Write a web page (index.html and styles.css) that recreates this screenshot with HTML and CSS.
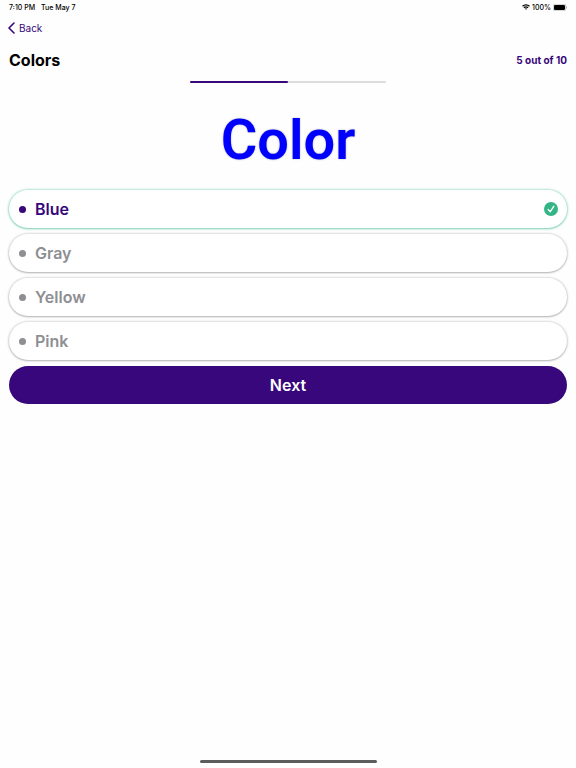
FILE: index.html
```html
<!DOCTYPE html>
<html lang="en">
<head>
    <meta charset="UTF-8">
    <meta name="viewport" content="width=device-width, initial-scale=1.0">
    <title>Colors</title>
    <link rel="stylesheet" href="styles.css">
</head>
<body>

<!-- Status Bar -->
<div class="status-bar">
    <span>7:10 PM</span>
    <span class="date">Tue May 7</span>
    <svg class="wifi" viewBox="0 0 16 12" width="8" height="6" fill="none" stroke="#000" stroke-width="2.4">
        <path d="M1 4.6a10 10 0 0 1 14 0"/>
        <path d="M3.8 7.6a6 6 0 0 1 8.4 0"/>
        <path d="M8 11.6L5.8 9.4a3.2 3.2 0 0 1 4.4 0z" fill="#000" stroke="none"/>
    </svg>
    <span>100%</span>
    <svg class="battery" viewBox="0 0 28 14" width="14" height="7">
        <rect x="0.5" y="0.5" width="25" height="13" rx="4" fill="none" stroke="#999"/>
        <rect x="2" y="2" width="22" height="10" rx="2.4" fill="#000"/>
        <path d="M26.5 5v4a2 2 0 0 0 0-4z" fill="#999"/>
    </svg>
</div>

<nav>
    <a href="#" class="back">
        <svg viewBox="0 0 7 12" width="7" height="12" fill="none" stroke="currentColor" stroke-width="1.6" stroke-linecap="round" stroke-linejoin="round">
            <path d="M6 1L1 6l5 5"/>
        </svg>
        Back
    </a>
</nav>

<main class="quiz">
    <div class="quiz-header">
        <h1>Colors</h1>
        <span class="count">5 out of 10</span>
    </div>

    <div class="progress">
        <div class="progress-fill" style="width: 50%"></div>
    </div>

    <h2 class="question">Color</h2>

    <!-- Answers -->
    <form class="answers">
        <label class="answer correct">
            <input type="radio" name="answer" value="blue" checked>
            <span>Blue</span>
            <svg class="check" viewBox="0 0 14 14" width="14" height="14">
                <circle cx="7" cy="7" r="7" fill="#34b586"/>
                <path d="M4.2 7.5l2 2.3 3.7-5.6" fill="none" stroke="#fff" stroke-width="1.3" stroke-linecap="round" stroke-linejoin="round"/>
            </svg>
        </label>
        <label class="answer">
            <input type="radio" name="answer" value="gray">
            <span>Gray</span>
        </label>
        <label class="answer">
            <input type="radio" name="answer" value="yellow">
            <span>Yellow</span>
        </label>
        <label class="answer">
            <input type="radio" name="answer" value="pink">
            <span>Pink</span>
        </label>
        <button type="button" class="next">Next</button>
    </form>
</main>

<div class="home-indicator"></div>

</body>
</html>
```
FILE: styles.css
```css
* {
    box-sizing: border-box;
}

body {
    display: flex;
    flex-direction: column;
    min-height: 100vh;
    margin: 0;
    background-color: #fefefe;
    color: #000;
    font-family: Inter, sans-serif;
}

.status-bar {
    display: flex;
    align-items: center;
    height: 14px;
    padding: 0 9px;
    font-size: 7px;
    font-weight: 500;
}

.date {
    margin-left: 6px;
}

.wifi {
    margin-left: auto;
    margin-right: 2px;
}

.battery {
    margin-left: 2px;
}

.back {
    display: inline-flex;
    align-items: center;
    gap: 4px;
    height: 28px;
    padding-left: 8px;
    color: #37077b;
    font-size: 10px;
    text-decoration: none;
}

.quiz {
    padding: 0 9px;
}

.quiz-header {
    display: flex;
    align-items: center;
    justify-content: space-between;
    height: 36px;
}

h1 {
    margin: 0;
    font-size: 16px;
    font-weight: 700;
}

.count {
    color: #37077b;
    font-size: 10px;
    font-weight: 700;
}

.progress {
    width: 35%;
    height: 2px;
    margin: 3px auto 0;
    border-radius: 1px;
    background-color: #dcdcdc;
}

.progress-fill {
    height: 100%;
    border-radius: 1px;
    background-color: #37077b;
}

.question {
    margin: 23px 0 16px;
    color: #0000ff;
    font-family: Roboto, sans-serif;
    font-size: 56px;
    font-weight: 600;
    line-height: 68px;
    text-align: center;
    text-shadow: 0 0 2px rgba(0, 0, 0, 0.3);
}

.answers {
    display: flex;
    flex-direction: column;
    gap: 6px;
}

.answer {
    display: flex;
    align-items: center;
    height: 38px;
    padding: 0 9px;
    border-radius: 19px;
    background-color: #fff;
    box-shadow: 0 0 2px 1px rgba(0, 0, 0, 0.13), 0 1px 2px rgba(0, 0, 0, 0.2);
    color: #8e8e93;
    font-size: 16px;
    font-weight: 600;
}

.answer input {
    appearance: none;
    width: 7px;
    height: 7px;
    margin: 0 9px 0 1px;
    border-radius: 50%;
    background-color: #8e8e93;
}

.correct {
    box-shadow: 0 0 2px 1px rgba(52, 181, 134, 0.35), 0 1px 2px rgba(52, 181, 134, 0.4);
    color: #37077b;
}

.correct input {
    background-color: #37077b;
}

.check {
    margin-left: auto;
}

.next {
    height: 38px;
    border: none;
    border-radius: 19px;
    background-color: #37077b;
    color: #fff;
    font-family: inherit;
    font-size: 16px;
    font-weight: 600;
}

.home-indicator {
    width: 177px;
    height: 3px;
    margin: auto auto 5px;
    border-radius: 2px;
    background-color: #5c5c5c;
}
```
